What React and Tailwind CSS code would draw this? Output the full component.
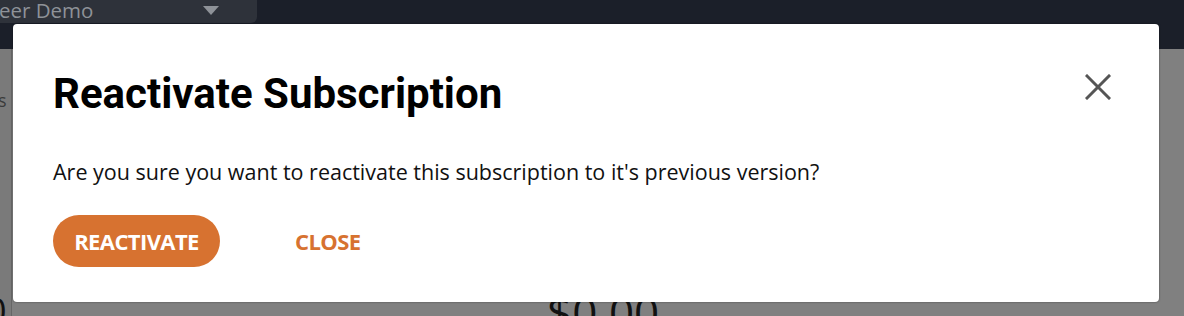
import React from 'react';

const CloseIcon = () => (
  <svg width="26" height="26" viewBox="0 0 26 26" fill="none" stroke="currentColor" strokeWidth="3" strokeLinecap="square">
    <line x1="2" y1="2" x2="24" y2="24" />
    <line x1="24" y1="2" x2="2" y2="24" />
  </svg>
);

const ReactivateModal = () => {
  return (
    <div className="absolute left-[13px] top-[24px] w-[1146px] h-[278px] bg-white rounded-[4px] shadow-[0_0_2px_rgba(0,0,0,0.5)] px-[40px] pt-[45px]">
      <div className="flex items-start justify-between">
        <h2 className="text-[42px] leading-[50px] font-bold text-black" style={{ fontFamily: 'Roboto, sans-serif' }}>
          Reactivate Subscription
        </h2>
        <button type="button" className="mt-[5px] mr-[8px] text-[#555555]">
          <CloseIcon />
        </button>
      </div>
      <p className="mt-[38px] text-[21.5px] leading-[30px] text-[#111111]" style={{ fontFamily: '"Open Sans", sans-serif' }}>
        Are you sure you want to reactivate this subscription to it's previous version?
      </p>
      <div className="mt-[28px] flex items-center gap-[75px]" style={{ fontFamily: '"Open Sans", sans-serif' }}>
        <button
          type="button"
          className="h-[52px] w-[167px] rounded-full bg-[#d77230] text-white text-[22px] font-bold tracking-[-0.6px]"
        >
          REACTIVATE
        </button>
        <button type="button" className="text-[#d77230] text-[22px] font-bold tracking-[-0.6px]">
          CLOSE
        </button>
      </div>
    </div>
  );
};

const App = () => {
  return (
    <div className="relative w-[1184px] h-[316px] overflow-hidden bg-[#808080]" style={{ fontFamily: '"Open Sans", sans-serif' }}>
      {/* dimmed header */}
      <div className="h-[49px] bg-[#1b1f29]">
        <div className="w-[257px] h-[23px] bg-[#2e323a] rounded-br-[6px] flex items-end justify-between pr-[38px] overflow-hidden">
          <span className="text-[20.5px] leading-[22px] text-[#8e9298] -ml-[1px] mb-[2px]">eer Demo</span>
          <span className="mb-[8px] w-0 h-0 border-l-[8px] border-r-[8px] border-t-[9px] border-l-transparent border-r-transparent border-t-[#8e9298]" />
        </div>
      </div>
      {/* dimmed page content */}
      <div className="flex">
        <div className="w-[12px] h-[267px] bg-[#7a7a7a] border-r border-[#666666] relative">
          <span className="absolute left-[-2px] top-[38px] text-[18px] text-[#3a3a3a]">s</span>
          <span className="absolute left-[-14px] top-[244px] text-[36px] leading-[36px] text-[#111111]">0</span>
        </div>
        <div className="flex-1 pt-[241px] pl-[535px]">
          <span className="text-[44px] leading-[44px] text-[#111111]">$0.00</span>
        </div>
      </div>
      <ReactivateModal />
    </div>
  );
};

export default App;
